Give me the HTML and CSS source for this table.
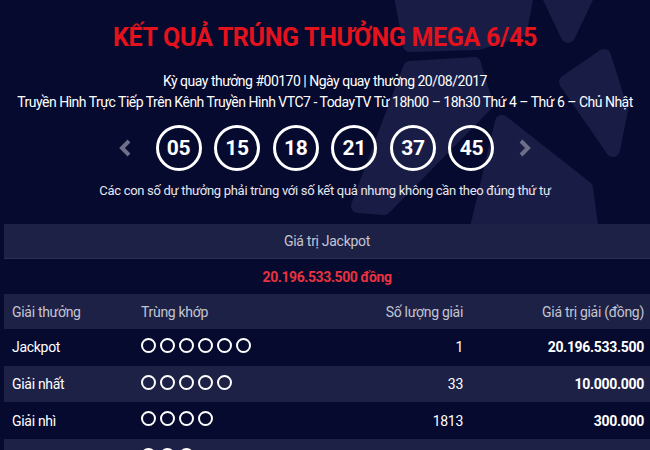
FILE: index.html
```html
<!DOCTYPE html>
<html lang="vi">
<head>
<meta charset="utf-8">
<title>Kết quả Mega 6/45</title>
<link rel="stylesheet" href="styles.css">
</head>
<body>
<div class="page">
  <svg class="bg-ball" width="650" height="225" viewBox="0 0 650 225" aria-hidden="true">
    <g fill="#191d46" stroke="#191d46" stroke-width="14" stroke-linejoin="round">
      <polygon points="400,-10 528,-10 520,30 478,43 410,45"/>
      <polygon points="546,-10 590,-10 568,36"/>
      <polygon points="566,82 604,56 621,110 613,150"/>
      <polygon points="410,68 474,64 486,104 384,208 358,206"/>
      <polygon points="502,122 586,188 592,232 476,232"/>
    </g>
  </svg>
  <header class="hero">
    <h1 class="title">KẾT QUẢ TRÚNG THƯỞNG MEGA 6/45</h1>
    <p class="meta">Kỳ quay thưởng #00170 | Ngày quay thưởng 20/08/2017</p>
    <p class="meta">Truyền Hình Trực Tiếp Trên Kênh Truyền Hình VTC7 - TodayTV Từ 18h00 – 18h30 Thứ 4 – Thứ 6 – Chủ Nhật</p>
    <div class="balls">
      <svg class="chev" width="13" height="18" viewBox="0 0 13 18"><polyline points="10,2 3,9 10,16" fill="none" stroke="#6c6f87" stroke-width="4"/></svg>
      <span class="ball">05</span>
      <span class="ball">15</span>
      <span class="ball">18</span>
      <span class="ball">21</span>
      <span class="ball">37</span>
      <span class="ball">45</span>
      <svg class="chev" width="13" height="18" viewBox="0 0 13 18"><polyline points="3,2 10,9 3,16" fill="none" stroke="#6c6f87" stroke-width="4"/></svg>
    </div>
    <p class="note">Các con số dự thưởng phải trùng với số kết quả nhưng không cần theo đúng thứ tự</p>
  </header>

  <section class="results">
    <div class="jp-head">Giá trị Jackpot</div>
    <div class="jp-value">20.196.533.500 đồng</div>
    <div class="table">
      <div class="row head">
        <div class="c1">Giải thưởng</div>
        <div class="c2">Trùng khớp</div>
        <div class="c3">Số lượng giải</div>
        <div class="c4">Giá trị giải (đồng)</div>
      </div>
      <div class="row">
        <div class="c1">Jackpot</div>
        <div class="c2"><i class="dot"></i><i class="dot"></i><i class="dot"></i><i class="dot"></i><i class="dot"></i><i class="dot"></i></div>
        <div class="c3">1</div>
        <div class="c4">20.196.533.500</div>
      </div>
      <div class="row alt">
        <div class="c1">Giải nhất</div>
        <div class="c2"><i class="dot"></i><i class="dot"></i><i class="dot"></i><i class="dot"></i><i class="dot"></i></div>
        <div class="c3">33</div>
        <div class="c4">10.000.000</div>
      </div>
      <div class="row">
        <div class="c1">Giải nhì</div>
        <div class="c2"><i class="dot"></i><i class="dot"></i><i class="dot"></i><i class="dot"></i></div>
        <div class="c3">1813</div>
        <div class="c4">300.000</div>
      </div>
      <div class="row alt">
        <div class="c1">Giải ba</div>
        <div class="c2"><i class="dot"></i><i class="dot"></i><i class="dot"></i></div>
        <div class="c3">29754</div>
        <div class="c4">30.000</div>
      </div>
    </div>
  </section>
</div>
</body>
</html>
```

FILE: styles.css
```css
* { box-sizing: border-box; }
html, body {
  margin: 0;
  padding: 0;
  background: #060a2f;
  overflow: hidden;
}
body {
  font-family: Roboto, "Liberation Sans", sans-serif;
  color: #ffffff;
  width: 650px;
  height: 450px;
}
.page {
  position: relative;
  width: 650px;
}
.bg-ball {
  position: absolute;
  top: 0;
  left: 0;
  z-index: 0;
}
.hero {
  position: relative;
  z-index: 1;
  text-align: center;
  padding-top: 24px;
}
.title {
  margin: 0 0 19px;
  font-size: 25px;
  line-height: 28px;
  font-weight: 700;
  color: #e3121c;
  letter-spacing: -0.3px;
}
.meta {
  margin: 0;
  font-size: 14px;
  line-height: 21px;
  white-space: nowrap;
  letter-spacing: -0.5px;
}
.balls {
  display: flex;
  justify-content: center;
  align-items: center;
  gap: 12.6px;
  margin-top: 12px;
}
.chev { margin: 0 11px; }
.ball {
  width: 46px;
  height: 46px;
  border: 3px solid #ffffff;
  border-radius: 50%;
  display: flex;
  align-items: center;
  justify-content: center;
  font-size: 21px;
  font-weight: 700;
  letter-spacing: -0.3px;
}
.note {
  margin: 9px 0 0;
  font-size: 13px;
  line-height: 21px;
  color: #e6e7ee;
  letter-spacing: -0.3px;
  white-space: nowrap;
}
.results {
  position: relative;
  z-index: 1;
  margin-top: 23px;
  padding-left: 4px;
  letter-spacing: -0.3px;
}
.jp-head {
  height: 35px;
  background: #1e2146;
  border-bottom: 1px solid #2c2f55;
  display: flex;
  align-items: center;
  justify-content: center;
  font-size: 14px;
  color: #c3c5d2;
}
.jp-value {
  height: 35px;
  display: flex;
  align-items: center;
  justify-content: center;
  font-size: 14px;
  font-weight: 700;
  color: #e8323f;
  letter-spacing: -0.4px;
}
.row {
  display: grid;
  grid-template-columns: 129px 1fr 120px 175px;
  height: 36.7px;
  align-items: center;
  font-size: 14px;
}
.row.head {
  height: 35px;
  background: #1e2146;
  color: #c3c5d2;
}
.row.alt { background: #1e2146; }
.c1, .c2 { padding-left: 8px; }
.c3 { text-align: right; padding-right: 12px; }
.c4 { text-align: right; padding-right: 6px; font-weight: 700; }
.row.head .c4 { font-weight: 400; }
.c2 { display: flex; gap: 4px; margin-top: -4px; }
.row.head .c2 { margin-top: 0; }
.dot {
  width: 15px;
  height: 15px;
  border: 2.5px solid #ffffff;
  border-radius: 50%;
}
```
